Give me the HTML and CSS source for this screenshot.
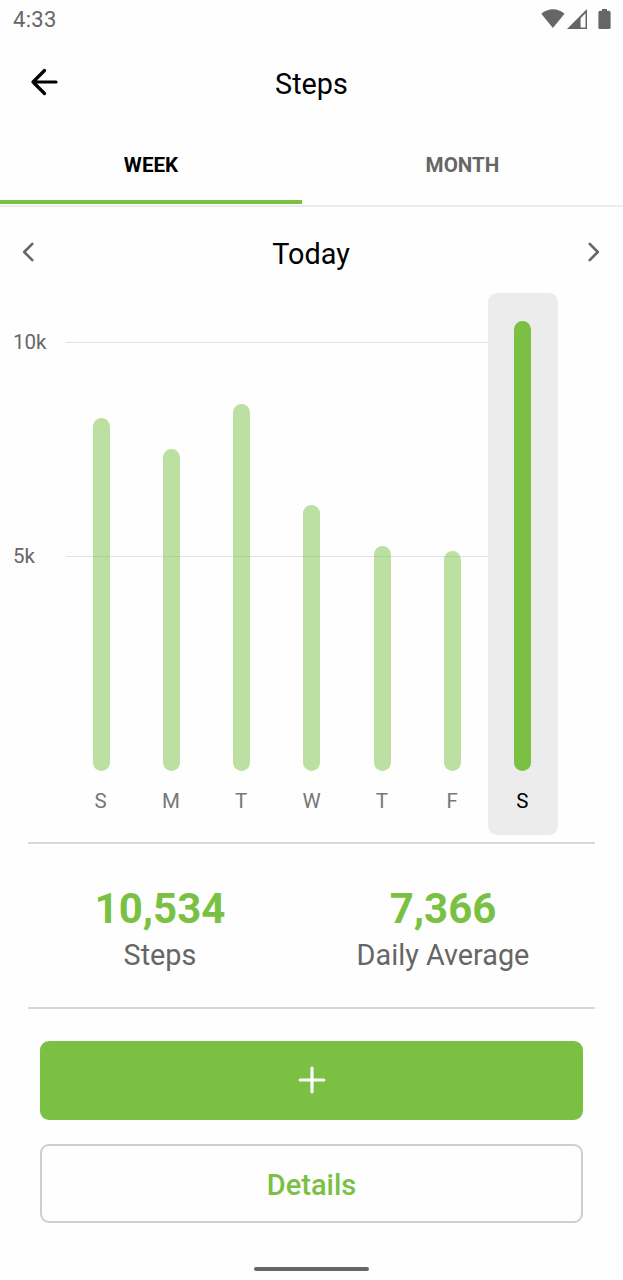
FILE: index.html
```
<!DOCTYPE html>
<html lang="en">
<head>
  <meta charset="UTF-8">
  <meta name="viewport" content="width=device-width, initial-scale=1.0">
  <title>Steps</title>
  <link rel="stylesheet" href="styles.css">
</head>
<body>
  <div class="status-bar">
    <span class="clock">4:33</span>
    <svg class="status-icons" width="72" height="22" viewBox="0 0 72 22">
      <path d="M0.3 4.8 C7 -1.3 17 -1.3 23.5 4.8 L11.9 19 Z"/>
      <path fill-rule="evenodd" d="M46 0 V20 H26 Z M44.5 4.2 L39.6 9.3 V18.6 H44.5 Z"/>
      <path d="M61 0 H66 V1.8 H68 Q69.6 1.8 69.6 3.4 V18.4 Q69.6 20 68 20 H59 Q57.4 20 57.4 18.4 V3.4 Q57.4 1.8 59 1.8 H61 Z"/>
    </svg>
  </div>

  <header class="header">
    <button class="icon-button" aria-label="Back">
      <svg width="28" height="28" viewBox="0 0 28 28">
        <path d="M14.5 2.5 L3 14 L14.5 25.5 M3 14 H26"/>
      </svg>
    </button>
    <h1>Steps</h1>
  </header>

  <nav class="tabs">
    <button class="tab active">WEEK</button>
    <button class="tab">MONTH</button>
  </nav>

  <div class="date-nav">
    <button class="icon-button" aria-label="Previous week">
      <svg width="14" height="22" viewBox="0 0 14 22">
        <path d="M11.3 2.8 L3.2 11 L11.3 19.2"/>
      </svg>
    </button>
    <h2>Today</h2>
    <button class="icon-button" aria-label="Next week">
      <svg width="14" height="22" viewBox="0 0 14 22">
        <path d="M2.7 2.8 L10.8 11 L2.7 19.2"/>
      </svg>
    </button>
  </div>

  <section class="chart">
    <div class="axis">
      <span>10k</span>
      <span>5k</span>
    </div>
    <div class="plot">
      <div class="day"><div class="bar" style="height: 353px"></div><span>S</span></div>
      <div class="day"><div class="bar" style="height: 322px"></div><span>M</span></div>
      <div class="day"><div class="bar" style="height: 367px"></div><span>T</span></div>
      <div class="day"><div class="bar" style="height: 266px"></div><span>W</span></div>
      <div class="day"><div class="bar" style="height: 225px"></div><span>T</span></div>
      <div class="day"><div class="bar" style="height: 220px"></div><span>F</span></div>
      <div class="day selected"><div class="bar" style="height: 450px"></div><span>S</span></div>
    </div>
  </section>

  <section class="stats">
    <div class="stat">
      <strong>10,534</strong>
      <span>Steps</span>
    </div>
    <div class="stat">
      <strong>7,366</strong>
      <span>Daily Average</span>
    </div>
  </section>

  <div class="actions">
    <button class="add-button" aria-label="Add steps">
      <svg width="28" height="28" viewBox="0 0 28 28">
        <path d="M14 2.2 V25.8 M2.2 14 H25.8"/>
      </svg>
    </button>
    <button class="details-button">Details</button>
  </div>

  <div class="home-indicator"></div>
</body>
</html>
```

FILE: styles.css
```
* {
  box-sizing: border-box;
}
body {
  font-family: Roboto, sans-serif;
  margin: 0;
  height: 1280px;
  overflow: hidden;
  background: #fefefe;
  color: #000;
}
button {
  font-family: inherit;
  padding: 0;
  border: none;
  background: none;
  cursor: pointer;
}
h1, h2 {
  margin: 0;
  font-size: 28.8px;
  font-weight: 400;
  line-height: 34px;
}
svg {
  display: block;
  fill: none;
  stroke-linecap: round;
  stroke-linejoin: round;
}

/* Status bar */
.status-bar {
  display: flex;
  justify-content: space-between;
  height: 40px;
  padding: 9px 10px 0 13px;
}
.clock {
  font-size: 22px;
  line-height: 22px;
  color: #666;
  letter-spacing: 0.3px;
}
.status-icons {
  fill: #666;
}

/* Header */
.header {
  display: grid;
  grid-template-columns: 60px 1fr 60px;
  align-items: center;
  height: 88px;
  text-align: center;
}
.header .icon-button {
  padding-left: 30px;
  padding-bottom: 4px;
}
.header path {
  stroke: #000;
  stroke-width: 3.2;
}

/* Tabs */
.tabs {
  display: flex;
  height: 79px;
  border-bottom: 2px solid #ececec;
}
.tab {
  flex: 0 0 302px;
  height: 76px;
  padding-top: 2px;
  font-size: 20.6px;
  font-weight: 700;
  color: #666;
  border-bottom: 4px solid transparent;
}
.tab:last-child {
  flex: 1;
}
.tab.active {
  color: #000;
  border-color: #7ac143;
}

/* Date navigation */
.date-nav {
  display: flex;
  align-items: center;
  justify-content: space-between;
  height: 86px;
  padding: 0 22px 0 21px;
}
.date-nav h2 {
  padding-top: 7px;
}
.date-nav .icon-button {
  padding-top: 4px;
}
.date-nav path {
  stroke: #666;
  stroke-width: 2.6;
}

/* Chart */
.chart {
  display: flex;
  height: 551px;
  margin-right: 65px;
}
.axis {
  width: 66px;
  padding: 37px 0 0 13px;
  font-size: 20.5px;
  line-height: 24px;
  color: #666;
}
.axis span {
  display: block;
  margin-bottom: 190px;
}
.plot {
  flex: 1;
  display: grid;
  grid-template-columns: repeat(7, 1fr);
  height: 542px;
  background: linear-gradient(#e2e2e2, #e2e2e2) 0 49px / 100% 1px no-repeat,
              linear-gradient(#e2e2e2, #e2e2e2) 0 263px / 100% 1px no-repeat;
}
.day {
  display: flex;
  flex-direction: column;
  justify-content: flex-end;
  align-items: center;
  padding-bottom: 22px;
  font-size: 20.5px;
  line-height: 24px;
  color: #777;
}
.day span {
  padding-right: 1px;
}
.bar {
  width: 17px;
  margin-bottom: 18px;
  border-radius: 9px;
  background: rgba(122, 193, 67, 0.5);
}
.day.selected {
  background: #ececec;
  border-radius: 9px;
  color: #000;
}
.selected .bar {
  background: #7ac143;
}

/* Totals */
.stats {
  display: flex;
  height: 167px;
  margin: -2px 28px 0;
  padding-top: 40px;
  border-top: 2px solid #d8d8d8;
  border-bottom: 2px solid #d8d8d8;
}
.stat {
  flex: 0 0 264px;
  text-align: center;
}
.stat:last-child {
  flex: 1;
  padding-right: 1px;
}
.stat strong {
  display: block;
  font-size: 42px;
  line-height: 50px;
  color: #7ac143;
}
.stat span {
  display: block;
  font-size: 28.8px;
  line-height: 42px;
  color: #666;
}

/* Buttons */
.actions {
  display: flex;
  flex-direction: column;
  gap: 24px;
  padding: 32px 40px 0;
}
.add-button, .details-button {
  display: flex;
  align-items: center;
  justify-content: center;
  height: 79px;
  border-radius: 9px;
}
.add-button {
  padding-bottom: 1px;
  background: #7ac143;
}
.add-button path {
  stroke: #fff;
  stroke-width: 3.2;
}
.details-button {
  padding-top: 2px;
  border: 2px solid #cecece;
  font-size: 29px;
  font-weight: 500;
  color: #7ac143;
}

.home-indicator {
  width: 115px;
  height: 4px;
  margin: 43.5px auto 0;
  border-radius: 2px;
  background: #666;
}
```
